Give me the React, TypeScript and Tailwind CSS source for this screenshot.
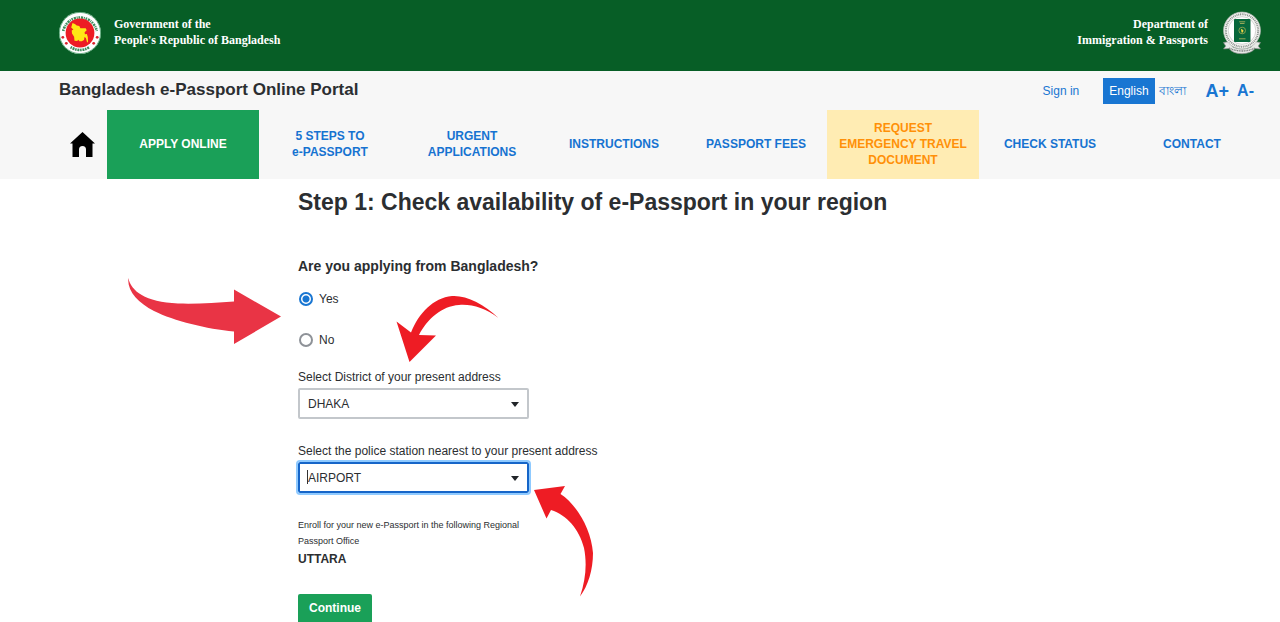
import React, { useState } from "react";

type NavItem = { lines: string[]; tone?: "primary" | "urgent" };

const navItems: NavItem[] = [
  { lines: ["APPLY ONLINE"], tone: "primary" },
  { lines: ["5 STEPS TO", "e-PASSPORT"] },
  { lines: ["URGENT", "APPLICATIONS"] },
  { lines: ["INSTRUCTIONS"] },
  { lines: ["PASSPORT FEES"] },
  { lines: ["REQUEST", "EMERGENCY TRAVEL", "DOCUMENT"], tone: "urgent" },
  { lines: ["CHECK STATUS"] },
  { lines: ["CONTACT"] },
];

const navTone = {
  primary: "grow-[152] bg-[#1aa058] text-white",
  urgent: "grow-[152] bg-[#ffecb3] text-[#ff9008]",
  plain: "grow-[142] text-[#1673d1]",
};

function GovernmentSeal() {
  return (
    <svg viewBox="0 0 44 44" className="size-11 shrink-0" aria-hidden="true">
      <circle cx="22" cy="22" r="21" fill="#fff" />
      <circle cx="22" cy="22" r="20.6" fill="none" stroke="#2f8f55" strokeWidth="0.7" />
      <path d="M5.200 20A17.200 17.200 0 0 1 38.800 20" fill="none" stroke="#3d8c5b" strokeWidth="2.600" strokeDasharray="1.6 0.9 2.2 0.7 1 0.8" />
      <path d="M12.6 36.2A17.4 17.4 0 0 0 31.4 36.2" fill="none" stroke="#3d8c5b" strokeWidth="2.6" strokeDasharray="1.5 0.8 2 0.7" />
      <circle cx="22" cy="22" r="14.4" fill="#ed1c24" />
      <g fill="#d9232c">
        <circle cx="4.8" cy="26.3" r="1.4" />
        <circle cx="8.3" cy="32.3" r="1.4" />
        <circle cx="39.2" cy="26.3" r="1.4" />
        <circle cx="35.7" cy="32.3" r="1.4" />
      </g>
      <path d="M14.5 12l2.4.9 1.8 1.5 2.6.6 1.1 2.2h5.3l1 2.1-2.1 2 .3 2 2-.3.9 2.9.2 4.5-.8 1.4-1.3-4.7-1.4-1.2-.5 3-2.2 1.3-2.4.1-1.1-1.5-1.1 1.2-2.7-.3-.4-4-2.1-3.3-.3-2.8 1.7-1.1-2.2-2.1z" fill="#ffe715" />
    </svg>
  );
}

function PassportSeal() {
  return (
    <svg viewBox="0 0 40 44" className="h-11 w-10 shrink-0" aria-hidden="true">
      <path d="M1.5 31.5l6-1 3.2 5.5q9.3 4.2 18.6 0l3.2-5.5 6 1-2.2 3.6 2.1 2.8-5.4-.4q-3.8 5.1-13 5.2-9.200 0-13-5.200l-5.400.4 2.100-2.800z" fill="#e6e8e6" stroke="#888d89" strokeWidth="0.7" />
      <circle cx="20" cy="19.500" r="18.400" fill="#f7f7f5" stroke="#b9bdb9" strokeWidth="0.8" />
      <circle cx="20" cy="19.500" r="16.200" fill="none" stroke="#8c918e" strokeWidth="2" strokeDasharray="1 0.800" />
      <circle cx="20" cy="19.500" r="13.800" fill="#fff" stroke="#aaa" strokeWidth="0.500" />
      <path d="M7 37q13 6 26 0" fill="none" stroke="#6e7370" strokeWidth="1.300" strokeDasharray="1 0.700" />
      <rect x="12" y="8" width="16.500" height="23" rx="0.800" fill="#08673b" />
      <path d="M17.200 10.800h6M18 12.500h4.500M17 27.800h6.500" stroke="#b9b760" strokeWidth="0.800" />
      <circle cx="20.200" cy="19.500" r="3.300" fill="none" stroke="#91a451" strokeWidth="0.900" />
      <path d="M18.900 17.800l1.400.6 1.200 1-.6 2-1.400.1z" fill="#f1d743" />
    </svg>
  );
}

type SelectFieldProps = { id: string; label: string; options: string[]; active?: boolean };

function SelectField({ id, label, options, active = false }: SelectFieldProps) {
  return (
    <div>
      <label htmlFor={id} className="block text-xs leading-5">{label}</label>
      <div className="relative mt-px w-[231px]">
        <select
          id={id}
          className={
            active
              ? "block h-[31px] w-full appearance-none rounded-[2px] border-2 border-[#1565c8] bg-white px-2 text-xs outline-2 outline-[#8fcaff]"
              : "block h-[31px] w-full appearance-none rounded-[2px] border-2 border-[#c3c7cb] bg-white px-2 text-xs outline-none"
          }
        >
          {options.map((option) => <option key={option}>{option}</option>)}
        </select>
        {active && <span className="absolute top-2 left-[9px] h-3.5 w-px bg-[#333]" />}
        <svg viewBox="0 0 8 5" className="pointer-events-none absolute top-3.5 right-2.5 h-[5px] w-2" aria-hidden="true">
          <path d="M0 0h8L4 5z" fill="#212529" />
        </svg>
      </div>
    </div>
  );
}

export default function App() {
  const [abroad, setAbroad] = useState(false);
  const radio =
    "size-3.5 appearance-none rounded-full border-2 border-[#8e9298] checked:border-[#1976d2] checked:bg-[radial-gradient(circle,#1976d2_0_3px,#fff_4px)]";

  return (
    <div className="bg-white font-['Liberation_Sans',Arial,sans-serif] text-[#2b2e31]">
      <header>
        <div className="flex h-[71px] items-start justify-between bg-[#075e26] pt-[11px] pr-[18px] pl-[58px] font-['Liberation_Serif',serif] text-xs leading-4 font-bold text-white">
          <div className="flex gap-3">
            <GovernmentSeal />
            <p className="pt-[5px]">Government of the<br />People&#39;s Republic of Bangladesh</p>
          </div>
          <div className="flex gap-3.5 text-right">
            <p className="pt-[5px]">Department of<br />Immigration &amp; Passports</p>
            <PassportSeal />
          </div>
        </div>
        <div className="bg-[#f7f7f7]">
          <div className="flex h-[39px] items-center justify-between pr-[26px] pl-[59px]">
            <p className="pb-0.5 text-[17px] font-bold">Bangladesh e-Passport Online Portal</p>
            <div className="flex items-center text-xs text-[#1976d2]">
              <a href="#signin" className="mr-6">Sign in</a>
              <button type="button" className="h-[26px] bg-[#1976d2] px-1.5 text-white">English</button>
              <button type="button" lang="bn" className="mr-5 ml-1 font-medium">বাংলা</button>
              <button type="button" className="mr-2 text-lg font-bold">A+</button>
              <button type="button" className="text-base font-bold">A-</button>
            </div>
          </div>
          <nav className="flex h-[69px] pr-[17px]">
            <a href="#home" aria-label="Home" className="flex w-[107px] shrink-0 items-center pl-[70px]">
              <svg viewBox="0 0 25 25" className="size-[25px]" aria-hidden="true">
                <path d="M12.500 0L25 11.500H22.500V25H16V17.500a3.500 3.500 0 0 0-7 0V25H2.500V11.500H0z" fill="#000" />
              </svg>
            </a>
            {navItems.map((item) => (
              <a
                key={item.lines.join(" ")}
                href="#nav"
                className={`flex basis-0 flex-col items-center justify-center pb-0.5 text-center text-xs leading-4 font-bold whitespace-nowrap ${navTone[item.tone ?? "plain"]}`}
              >
                {item.lines.map((line) => <span key={line}>{line}</span>)}
              </a>
            ))}
          </nav>
        </div>
      </header>

      <main className="relative pl-[298px]">
        <h1 className="pt-[7px] text-[23px] leading-8 font-bold">Step 1: Check availability of e-Passport in your region</h1>
        <form onSubmit={(event) => event.preventDefault()}>
          <fieldset className="pt-[38px]">
            <legend className="contents">
              <span className="block text-sm leading-5 font-bold">Are you applying from Bangladesh?</span>
            </legend>
            <label className="mt-[13px] flex h-5 items-center gap-1.5 pl-px text-xs">
              <input type="radio" name="region" className={radio} checked={!abroad} onChange={() => setAbroad(false)} />
              Yes
            </label>
            <label className="mt-[21px] flex h-5 items-center gap-1.5 pl-px text-xs">
              <input type="radio" name="region" className={radio} checked={abroad} onChange={() => setAbroad(true)} />
              No
            </label>
          </fieldset>
          <div className="mt-[17px] flex flex-col gap-[22px]">
            <SelectField id="district" label="Select District of your present address" options={["DHAKA"]} />
            <SelectField id="station" label="Select the police station nearest to your present address" options={["AIRPORT"]} active />
          </div>
          <p className="mt-6 w-[231px] text-[9px] leading-4">Enroll for your new e-Passport in the following Regional Passport Office</p>
          <p className="text-xs leading-5 font-bold">UTTARA</p>
          <button type="submit" className="mt-[25px] block h-7 rounded-t-[2px] bg-[#1aa058] px-[11px] text-xs font-bold text-white">Continue</button>
        </form>

        <svg viewBox="128 277 154 68" className="pointer-events-none absolute top-[98px] left-32 h-[68px] w-[154px]" aria-hidden="true">
          <path d="M128.300 278C131 291 145 302 178 303.500C197 304 216 303 234 301.500V289.500L281 316.500L234 344V331.500C207 329 174 321 154 311C138 303 127 291 128.300 278z" fill="#e93445" />
        </svg>
        <svg viewBox="396 295 103 69" className="pointer-events-none absolute top-[116px] left-[396px] h-[69px] w-[103px]" aria-hidden="true">
          <path d="M396.500 321.500L409.500 362L436 335.500L419 335C427 319 442 306 459 305C472 304 485 308 498.500 318C484 304 466 295 452 296C433 298 419 313 411 332.500z" fill="#ee1c24" />
        </svg>
        <svg viewBox="533 485 61 112" className="pointer-events-none absolute top-[306px] left-[533px] h-28 w-[61px]" aria-hidden="true">
          <path d="M534 490L565 486L560.500 494C576 504 591 528 593 553C593 570 588 586 580 596.500C586 579 587 563 584 548C579 529 567 515 551 510L546.500 518.500z" fill="#ee1c24" />
        </svg>
      </main>
    </div>
  );
}
